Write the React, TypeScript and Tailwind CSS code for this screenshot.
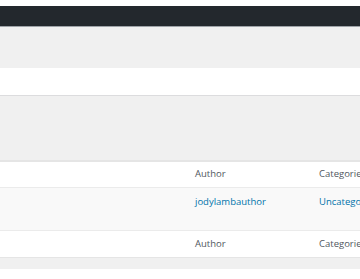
const ROW_CELLS = [
  { author: "Author", categories: "Categories", link: false },
];

function HeaderRow({ bordered }: { bordered?: "top" | "bottom" }) {
  return (
    <div
      className={`flex h-[26px] items-center bg-white text-[#50575e] ${
        bordered === "top" ? "border-t border-[#e5e5e5]" : ""
      }`}
    >
      <div className="w-[187px] shrink-0" />
      <div className="w-[124px] shrink-0 px-2">Author</div>
      <div className="shrink-0 px-2">Categories</div>
    </div>
  );
}

export default function App() {
  return (
    <div
      className="w-[360px] h-[279px] overflow-hidden whitespace-nowrap bg-white text-[9.5px]"
      style={{ fontFamily: '"Open Sans", "Liberation Sans", sans-serif' }}
    >
      <div className="h-[6px] bg-white" />
      <div className="h-[20px] bg-[#23282d]" />
      <div className="h-px bg-[#9ea3a8]" />
      <div className="h-[41px] bg-[#f0f0f0]" />
      <div className="h-[27px] bg-white" />
      <div className="h-px bg-[#dcdcde]" />
      <div className="h-[64px] bg-[#f0f0f0]" />

      <div className="border-y border-[#e5e5e5]">
        <HeaderRow bordered="top" />
        <div className="flex h-[44px] items-start border-y border-[#ebebeb] bg-[#f9f9f9] pt-[7px] text-[#0073aa]">
          <div className="w-[187px] shrink-0" />
          <div className="w-[124px] shrink-0 px-2">jodylambauthor</div>
          <div className="shrink-0 px-2">Uncategorized</div>
        </div>
        {ROW_CELLS.map((r) => (
          <HeaderRow key={r.author} />
        ))}
      </div>

      <div className="h-[11px] bg-[#f0f0f0]" />
    </div>
  );
}
